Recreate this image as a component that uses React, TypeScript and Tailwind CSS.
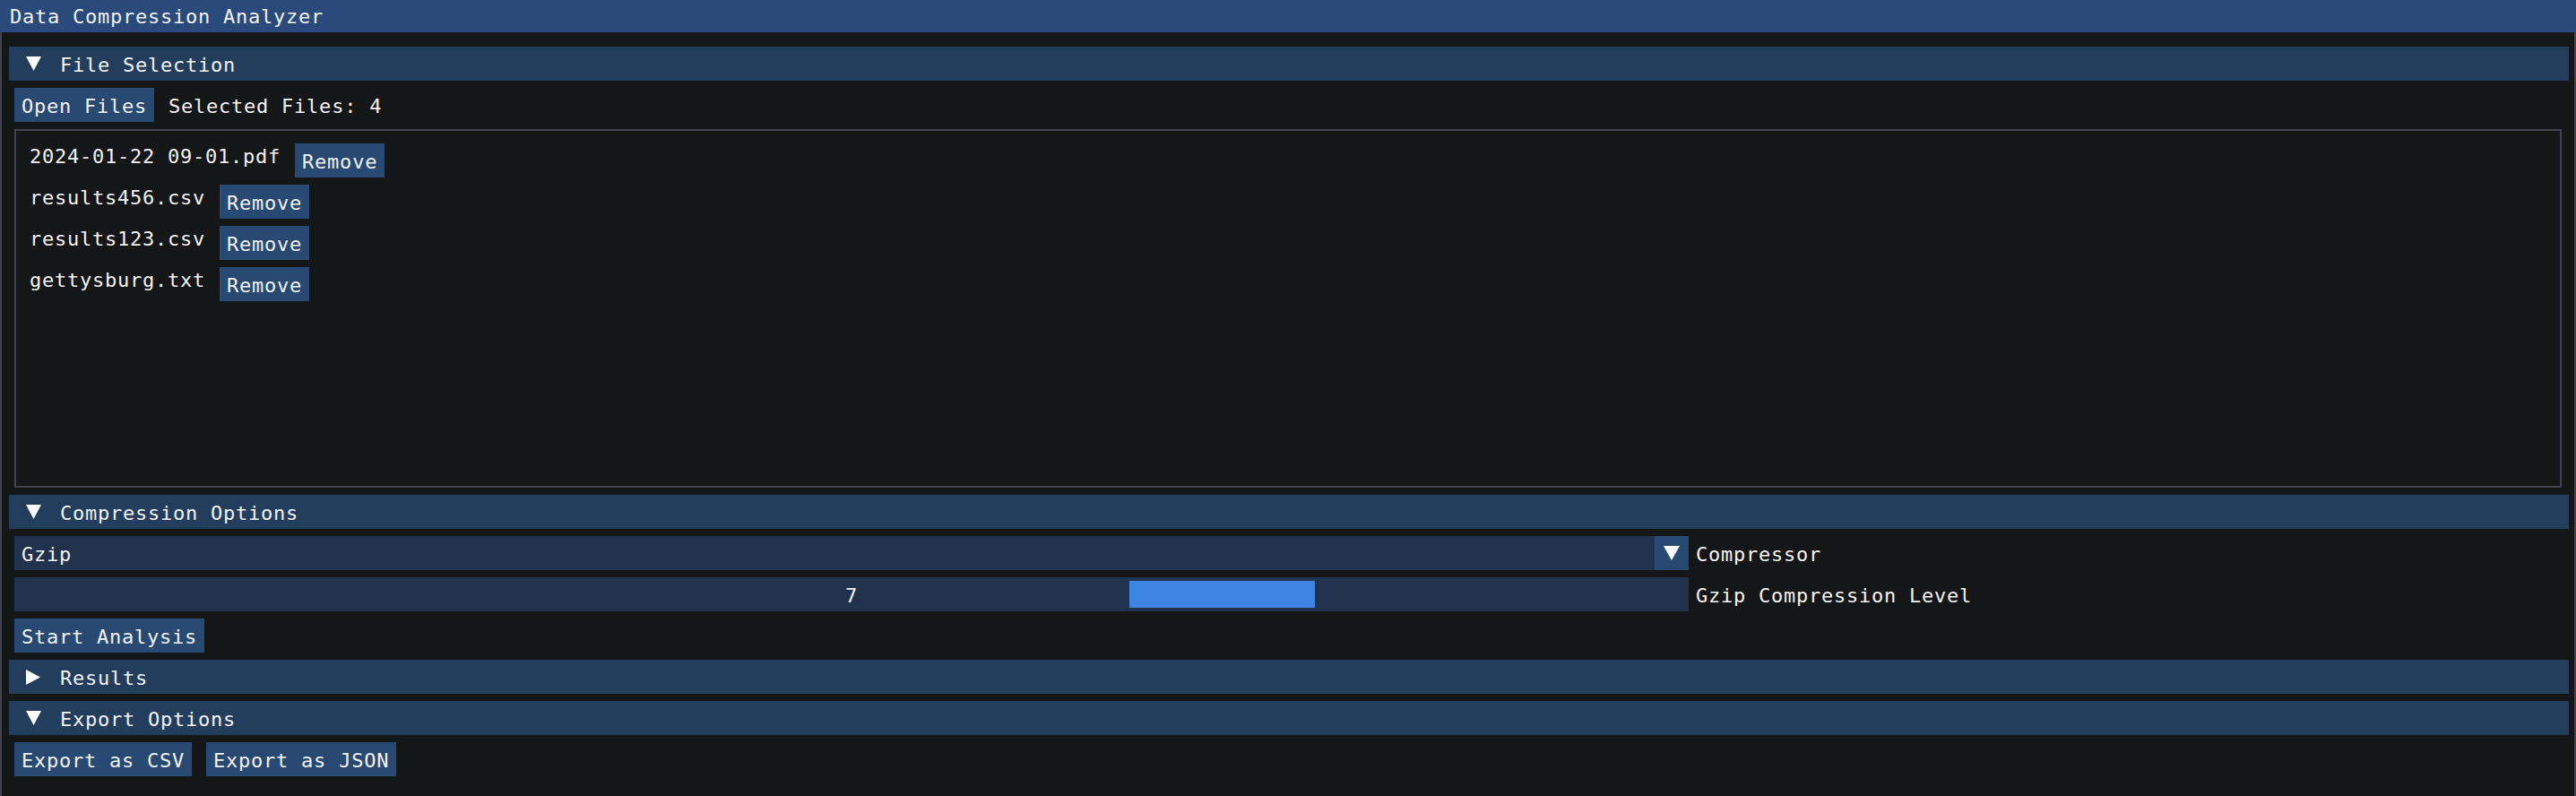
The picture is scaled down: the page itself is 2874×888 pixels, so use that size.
import React from 'react';

const files = ['2024-01-22 09-01.pdf', 'results456.csv', 'results123.csv', 'gettysburg.txt'];

const DownArrow: React.FC = () => (
  <svg width="17" height="16" viewBox="0 0 17 16">
    <polygon points="0,0 17,0 8.5,16" fill="#ffffff" />
  </svg>
);

const RightArrow: React.FC = () => (
  <svg width="16" height="17" viewBox="0 0 16 17">
    <polygon points="0,0 16,8.5 0,17" fill="#ffffff" />
  </svg>
);

const Header: React.FC<{ title: string; open?: boolean }> = ({ title, open = true }) => (
  <div className="flex h-[38px] items-center bg-[#233e5d] ml-[-6px] mr-[-8px] pl-[18px]">
    <div className="flex w-[18px] justify-center">{open ? <DownArrow /> : <RightArrow />}</div>
    <span className="ml-[21px] pt-[4px]">{title}</span>
  </div>
);

const Button: React.FC<{ label: string }> = ({ label }) => (
  <div className="flex h-[38px] shrink-0 items-center bg-[#274972] px-[8px] pt-[4px]">{label}</div>
);

const App: React.FC = () => {
  return (
    <div
      className="flex h-[888px] w-[2874px] flex-col overflow-hidden bg-[#151618] text-[22px] leading-[26px] tracking-[0.76px] text-[#f2f2f2]"
      style={{ fontFamily: '"DejaVu Sans Mono", "Liberation Mono", monospace' }}
    >
      <div className="flex h-[36px] shrink-0 items-center bg-[#294a7a] pl-[11px] pt-[2px]">Data Compression Analyzer</div>

      <div className="flex flex-1 flex-col gap-[8px] border-x-2 border-[#41424b] pl-[14px] pr-[14px] pt-[16px]">
        <Header title="File Selection" />

        <div className="flex items-center gap-[16px]">
          <Button label="Open Files" />
          <span className="pt-[4px]">Selected Files: 4</span>
        </div>

        <div className="flex h-[400px] shrink-0 flex-col gap-[8px] border-2 border-[#41424b] pl-[15px] pt-[14px]">
          {files.map((f) => (
            <div key={f} className="flex items-start gap-[16px]">
              <span className="pt-[2px]">{f}</span>
              <Button label="Remove" />
            </div>
          ))}
        </div>

        <Header title="Compression Options" />

        <div className="flex items-center">
          <div className="flex h-[38px] w-[1868px] items-center bg-[#20324d]">
            <span className="flex-1 pl-[8px] pt-[4px]">Gzip</span>
            <div className="flex h-[38px] w-[38px] items-center justify-center bg-[#274972]">
              <svg width="18" height="16" viewBox="0 0 18 16">
                <polygon points="0,0 18,0 9,16" fill="#ffffff" />
              </svg>
            </div>
          </div>
          <span className="ml-[8px] pt-[4px]">Compressor</span>
        </div>

        <div className="flex items-center">
          <div className="relative flex h-[38px] w-[1868px] items-center justify-center bg-[#20324d]">
            <div className="absolute bottom-[4px] left-[1244px] top-[4px] w-[207px] bg-[#3d85e0]" />
            <span className="relative pt-[4px]">7</span>
          </div>
          <span className="ml-[8px] pt-[4px]">Gzip Compression Level</span>
        </div>

        <div className="flex">
          <Button label="Start Analysis" />
        </div>

        <Header title="Results" open={false} />
        <Header title="Export Options" />

        <div className="flex gap-[16px]">
          <Button label="Export as CSV" />
          <Button label="Export as JSON" />
        </div>
      </div>
    </div>
  );
};

export default App;
